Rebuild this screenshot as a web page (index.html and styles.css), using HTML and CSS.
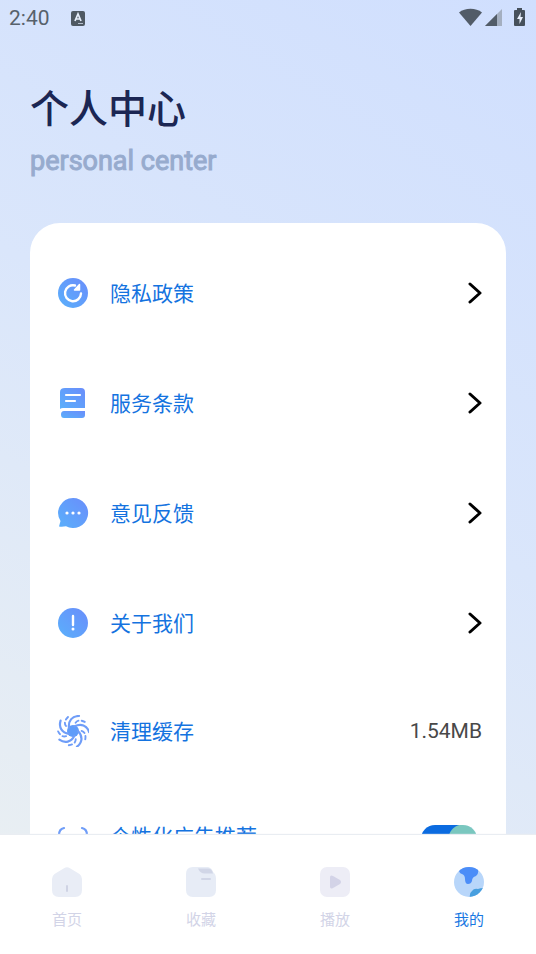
FILE: index.html
```html
<!DOCTYPE html>
<html lang="zh-CN">
<head>
<meta charset="utf-8">
<meta name="viewport" content="width=device-width, initial-scale=1">
<title>个人中心</title>
<link rel="stylesheet" href="styles.css">
</head>
<body>
<svg class="defs" width="0" height="0" aria-hidden="true">
  <defs>
    <linearGradient id="blue" x1="0" y1="1" x2="1" y2="0"><stop offset="0" stop-color="#5ab0fb"/><stop offset="1" stop-color="#6a8dfb"/></linearGradient>
    <clipPath id="globe"><circle cx="16" cy="16" r="15"/></clipPath>
  </defs>
</svg>
<div class="status">
  <span class="clock">2:40</span>
  <svg width="16" height="16" viewBox="0 0 16 16" aria-hidden="true"><rect x="1" y="1" width="14" height="15" rx="2" fill="#4f5963"/><path d="M5 11 8 4l3 7M6 9h4" fill="none" stroke="#e6eefb" stroke-width="1.7"/><path d="M8 13.500h5" stroke="#b5bfcc"/></svg>
  <svg class="signals" width="68" height="22" viewBox="0 0 68 22" aria-hidden="true">
    <path d="M0 5.500C6 .5 17 .5 23 5.500L11.500 19Z" fill="#525c68"/>
    <path d="M43 2v17H26Z" fill="#a4afc0"/><path d="M38 7v12H26Z" fill="#525c68"/>
    <path d="M58 1h5v2h2q1 0 1 1v14q0 1-1 1h-9q-1 0-1-1V4q0-1 1-1h2Z" fill="#46505b"/><path d="m62 5-4 7h2.500v5l3.500-7h-2.500Z" fill="#e8effc"/>
  </svg>
</div>
<header class="heading">
  <h1>个人中心</h1>
  <p>personal center</p>
</header>
<main class="card">
  <a class="row" href="#privacy">
    <svg class="icon" viewBox="0 0 32 32" aria-hidden="true"><circle cx="16" cy="16" r="15" fill="url(#blue)"/><path d="M18 8.500A8 8 0 1 0 24 16.500" fill="none" stroke="#fff" stroke-width="2.400" stroke-linecap="round"/><path d="M22.500 7.500v5.500h-5Z" fill="#fff" stroke="#fff" stroke-width="1.500" stroke-linejoin="round"/></svg>
    <span class="label">隐私政策</span>
    <svg class="chevron" viewBox="0 0 14 24" aria-hidden="true"><path d="m2 3 10 9-10 9"/></svg>
  </a>
  <a class="row" href="#terms">
    <svg class="icon" viewBox="0 0 32 32" aria-hidden="true"><path d="M8 1h16q4 0 4 4v16H6q-2 0-3 1V5q0-4 5-4Z" fill="url(#blue)"/><path d="M7 24h21v4q0 3-3 3H7q-3 0-3-3.500T7 24Z" fill="url(#blue)"/><path d="M9 8h14M9 14h9" stroke="#fff" stroke-width="2.200" stroke-linecap="round"/></svg>
    <span class="label">服务条款</span>
    <svg class="chevron" viewBox="0 0 14 24" aria-hidden="true"><path d="m2 3 10 9-10 9"/></svg>
  </a>
  <a class="row" href="#feedback">
    <svg class="icon" viewBox="0 0 32 32" aria-hidden="true"><path d="M16 1a15 15 0 1 1-7 28.200Q5.500 30 2 29.500L3.500 24A15 15 0 0 1 16 1Z" fill="url(#blue)"/><g fill="#fff"><circle cx="10" cy="16" r="1.600"/><circle cx="16" cy="16" r="1.600"/><circle cx="22" cy="16" r="1.600"/></g></svg>
    <span class="label">意见反馈</span>
    <svg class="chevron" viewBox="0 0 14 24" aria-hidden="true"><path d="m2 3 10 9-10 9"/></svg>
  </a>
  <a class="row" href="#about">
    <svg class="icon" viewBox="0 0 32 32" aria-hidden="true"><circle cx="16" cy="16" r="15" fill="url(#blue)"/><path d="M16 9v9" stroke="#fff" stroke-width="2.400" stroke-linecap="round"/><circle cx="16" cy="22" r="1.500" fill="#fff"/></svg>
    <span class="label">关于我们</span>
    <svg class="chevron" viewBox="0 0 14 24" aria-hidden="true"><path d="m2 3 10 9-10 9"/></svg>
  </a>
  <button class="row short" type="button">
    <svg class="icon" viewBox="0 0 32 32" aria-hidden="true">
      <circle cx="16" cy="16" r="6" fill="#5f9cf9"/>
      <g fill="none" stroke="#6f9df8" stroke-width="2.200" stroke-linecap="round">
        <path id="arm" d="M12 13C11 6 15 1 22 1"/>
        <use href="#arm" transform="rotate(72 16 16)"/><use href="#arm" transform="rotate(144 16 16)"/><use href="#arm" transform="rotate(216 16 16)"/><use href="#arm" transform="rotate(288 16 16)"/>
        <g stroke-width="1.900" stroke-dasharray="3.500 3.500"><path id="dash" d="M9 11Q6 7 11 2"/>
        <use href="#dash" transform="rotate(72 16 16)"/><use href="#dash" transform="rotate(144 16 16)"/><use href="#dash" transform="rotate(216 16 16)"/><use href="#dash" transform="rotate(288 16 16)"/></g>
      </g>
    </svg>
    <span class="label">清理缓存</span>
    <span class="size">1.54MB</span>
  </button>
  <label class="row short">
    <svg class="icon" viewBox="0 0 32 32" aria-hidden="true"><path d="M2 15q0-6 5-7M25 8q5 1 5 7M2 20v4q0 5 5 5M25 29q5 0 5-5v-4" fill="none" stroke="#6f9df8" stroke-width="2.200" stroke-linecap="round"/></svg>
    <span class="label">个性化广告推荐</span>
    <input class="switch" type="checkbox" role="switch" checked>
  </label>
</main>
<nav class="tabs">
  <a href="#home">
    <svg class="icon" viewBox="0 0 32 32" aria-hidden="true"><path d="M13 2.200q3-2 6 0L28.500 8q2.500 2 2.500 5v11q0 7-7 7H8q-7 0-7-7V13q0-3 2.500-5Z" fill="#e9edf6"/><path d="M16 20v5" stroke="#cfd3e4" stroke-width="2" stroke-linecap="round"/></svg>
    <span>首页</span>
  </a>
  <a href="#favorites">
    <svg class="icon" viewBox="0 0 32 32" aria-hidden="true"><path d="M8 1h15q4 1 5 5 3 2 3 7v11q0 7-7 7H8q-7 0-7-7V8q0-7 7-7Z" fill="#e7ecf6"/><path d="M13 2.500h10q4 0 5 5h-8q-5 0-7-5Z" fill="#d1d6e7"/><path d="M17 13h8" stroke="#d1d6e7" stroke-width="2" stroke-linecap="round"/></svg>
    <span>收藏</span>
  </a>
  <a href="#play">
    <svg class="icon" viewBox="0 0 32 32" aria-hidden="true"><rect x="1" y="1" width="30" height="30" rx="7" fill="#ededf6"/><path d="M11 11.500v9q0 3 3 1.500l7-4q2-2 0-4l-7-4q-3-1.500-3 1.500Z" fill="#d3d3e7"/></svg>
    <span>播放</span>
  </a>
  <a class="active" href="#mine" aria-current="page">
    <svg class="icon" viewBox="0 0 32 32" aria-hidden="true"><circle cx="16" cy="16" r="15" fill="#b8d6fa"/><g clip-path="url(#globe)"><path d="M5 0h20v3q1 5-2 7-4 1-4 5-1 3-4 3t-3-5q0-4-3-5Q6 7 6 4Z" fill="#4b8df8"/><path d="M17 32q-1-5 2-7 2-3 6-2 2-1 6-1v10Z" fill="#489fdf"/></g></svg>
    <span>我的</span>
  </a>
</nav>
</body>
</html>
```
FILE: styles.css
```css
* {
  box-sizing: border-box;
}

body {
  margin: 0;
  height: 100vh;
  display: flex;
  flex-direction: column;
  overflow: hidden;
  background: linear-gradient(212deg, #d0dffe 0%, #dae6fb 45%, #ebf0f1 100%);
  font-family: Roboto, "Noto Sans CJK SC", sans-serif;
}

.defs {
  position: absolute;
}

.status {
  display: flex;
  align-items: center;
  gap: 20px;
  height: 36px;
  flex: none;
  padding: 0 9px;
  color: #57616b;
  font-size: 21px;
}

.signals {
  margin-left: auto;
}

.heading {
  flex: none;
  padding: 46px 30px 0;
  height: 187px;
}

.heading h1 {
  margin: 0;
  color: #1b2653;
  font-size: 39px;
  font-weight: 500;
  line-height: 56px;
}

.heading p {
  margin: 7px 0 0;
  color: #97abce;
  font-size: 27px;
  font-weight: 400;
  line-height: 32px;
  -webkit-text-stroke: 1px #97abce;
}

.card {
  flex: 1;
  min-height: 0;
  overflow: hidden;
  margin: 0 30px;
  padding: 15px 24px 0 27px;
  border-radius: 30px 30px 0 0;
  background: #fff;
}

.row {
  display: flex;
  align-items: center;
  width: 100%;
  height: 110px;
  padding: 0;
  border: 0;
  background: none;
  font: inherit;
  text-decoration: none;
}

.row.short {
  height: 105px;
}

.icon {
  flex: none;
  width: 32px;
  height: 32px;
}

.label {
  flex: 1;
  margin-left: 21px;
  padding-top: 2px;
  color: #1473e0;
  font-size: 21px;
  line-height: 32px;
  text-align: left;
}

.chevron {
  width: 14px;
  height: 24px;
  fill: none;
  stroke: #000;
  stroke-width: 3;
  stroke-linecap: round;
  stroke-linejoin: round;
}

.size {
  color: #484848;
  font-size: 21px;
}

.switch {
  appearance: none;
  width: 56px;
  height: 28px;
  margin: 6px 5px 0 0;
  border-radius: 14px;
  background: radial-gradient(circle at 42px 14px, #7ac7bf 14px, #0b6be0 15px);
}

.tabs {
  flex: none;
  display: grid;
  grid-template-columns: repeat(4, 1fr);
  height: 119px;
  padding-top: 31px;
  background: #fff;
  box-shadow: 0 -1px 1px #e9edf2;
}

.tabs a {
  display: flex;
  flex-direction: column;
  align-items: center;
  gap: 11px;
  color: #d2d4e7;
  font-size: 15px;
  line-height: 22px;
  text-decoration: none;
}

.tabs .active {
  color: #1878e2;
}
```
